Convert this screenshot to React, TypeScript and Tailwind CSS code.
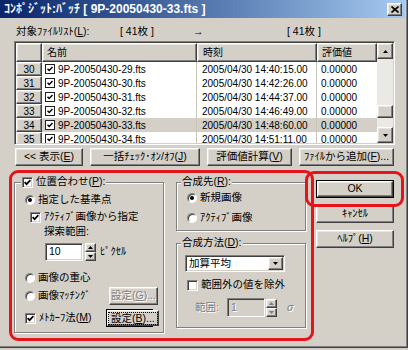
import React from 'react';

const FONT = "font-['Liberation_Sans','Noto_Sans_CJK_JP',sans-serif]";
const RAISED =
  'border border-t-white border-l-white border-r-[#404040] border-b-[#404040] shadow-[inset_-1px_-1px_0_#808080,inset_1px_1px_0_#e8e6e0] bg-[#d4d0c8]';
const SUNKEN =
  'border border-t-[#808080] border-l-[#808080] border-r-white border-b-white shadow-[inset_1px_1px_0_#404040,inset_-1px_-1px_0_#d4d0c8]';
const GROUP = 'border border-[#808080] shadow-[inset_1px_1px_0_#fff,1px_1px_0_#fff]';
const DIS = 'text-[#808080] [text-shadow:1px_1px_0_#fff]';

type Kids = { children?: React.ReactNode; className?: string };

const Tick = ({ s = 7 }: { s?: number }) => (
  <svg width={s} height={s} viewBox="0 0 7 7">
    <path d="M0.6 3.2 L2.6 5.2 L6.4 1.2" stroke="#000" strokeWidth="1.7" fill="none" />
  </svg>
);

const CheckBox = ({ checked }: { checked?: boolean }) => (
  <span className={`${SUNKEN} bg-white w-[11px] h-[11px] shrink-0 flex items-center justify-center`}>
    {checked && <Tick />}
  </span>
);

const Radio = ({ checked }: { checked?: boolean }) => (
  <span className="w-[10px] h-[10px] shrink-0 rounded-full border border-t-[#808080] border-l-[#808080] border-r-white border-b-white bg-white shadow-[inset_1px_1px_0_#404040] flex items-center justify-center">
    {checked && <span className="w-[4px] h-[4px] rounded-full bg-black" />}
  </span>
);

const Tri = ({ down, color = '#000' }: { down?: boolean; color?: string }) => (
  <svg width="5" height="3" viewBox="0 0 5 3">
    <path d={down ? 'M0 0 H5 L2.5 3 Z' : 'M0 3 H5 L2.5 0 Z'} fill={color} />
  </svg>
);

const Spin = ({ disabled }: { disabled?: boolean }) => (
  <div className="flex flex-col w-[11px] h-[18px]">
    <div className={`${RAISED} flex-1 flex items-center justify-center`}>
      <Tri color={disabled ? '#808080' : '#000'} />
    </div>
    <div className={`${RAISED} flex-1 flex items-center justify-center`}>
      <Tri down color={disabled ? '#808080' : '#000'} />
    </div>
  </div>
);

const Btn = ({ children, className = '', disabled, focus, def }: Kids & { disabled?: boolean; focus?: boolean; def?: boolean }) =>
  def || focus ? (
    <div className={`border border-black flex ${className}`}>
      <div className={`${RAISED} flex-1 flex items-center justify-center`}>
        <span className={focus ? 'border border-dotted border-black px-[2px] leading-[11px]' : ''}>{children}</span>
      </div>
    </div>
  ) : (
    <div className={`${RAISED} flex items-center justify-center ${disabled ? DIS : ''} ${className}`}>{children}</div>
  );

const Legend = ({ children, className = '' }: Kids) => (
  <div className={`-mt-[7px] h-[12px] w-fit px-[1px] bg-[#d4d0c8] flex items-center gap-[3px] ${className}`}>{children}</div>
);

const rows = [
  { n: 30, f: '9P-20050430-29.fts', t: '2005/04/30 14:40:15.00' },
  { n: 31, f: '9P-20050430-30.fts', t: '2005/04/30 14:42:26.00' },
  { n: 32, f: '9P-20050430-31.fts', t: '2005/04/30 14:44:37.00' },
  { n: 33, f: '9P-20050430-32.fts', t: '2005/04/30 14:46:49.00' },
  { n: 34, f: '9P-20050430-33.fts', t: '2005/04/30 14:48:60.00', sel: true },
  { n: 35, f: '9P-20050430-34.fts', t: '2005/04/30 14:51:11.00' },
];

export default function App() {
  return (
    <div className={`relative w-[408px] h-[350px] overflow-hidden bg-[#d4d0c8] text-black ${FONT}`}>
      <div className="w-[408px] h-[348px] flex flex-col border-r border-b border-r-[#404040] border-b-[#404040] shadow-[inset_-1px_-1px_0_#808080]">
        {/* title bar */}
        <div className="h-[18px] w-[405px] shrink-0 flex items-center bg-linear-to-r from-[#0a246a] to-[#a6caf0]">
          <span className="pl-[4px] text-[12px] font-bold text-white leading-none whitespace-pre">
            ｺﾝﾎﾟｼﾞｯﾄ:ﾊﾞｯﾁ [ 9P-20050430-33.fts ]
          </span>
          <div className={`ml-auto mr-[3px] w-[15px] h-[13px] ${RAISED} flex items-center justify-center`}>
            <svg width="8" height="7" viewBox="0 0 8 7">
              <path d="M0.5 0.5 L7.5 6.5 M7.5 0.5 L0.5 6.5" stroke="#000" strokeWidth="1.6" />
            </svg>
          </div>
        </div>

        {/* file list label */}
        <div className="mt-[6px] h-[16px] pl-[16px] flex items-center text-[10.5px] whitespace-pre">
          <span className="w-[104px]">
            対象ﾌｧｲﾙﾘｽﾄ(<u>L</u>):
          </span>
          <span className="w-[73px]">[ 41枚 ]</span>
          <span className="w-[94px]">→</span>
          <span>[ 41枚 ]</span>
        </div>

        {/* list */}
        <div className={`mt-[1px] ml-[14px] w-[381px] h-[104px] p-[1px] bg-white flex ${SUNKEN}`}>
          <div className="w-[361px] h-[100px] overflow-hidden flex flex-col text-[10px] whitespace-pre">
            <div className="h-[19px] shrink-0 flex">
              <div className={`w-[26px] ${RAISED}`} />
              <div className={`w-[155px] pl-[4px] flex items-center ${RAISED}`}>名前</div>
              <div className={`w-[120px] pl-[5px] flex items-center ${RAISED}`}>時刻</div>
              <div className={`w-[60px] pl-[4px] flex items-center ${RAISED}`}>評価値</div>
            </div>
            {rows.map((r) => (
              <div key={r.n} className={`h-[14px] shrink-0 flex ${r.sel ? 'bg-[#d4d0c8]' : ''}`}>
                <div className={`w-[26px] flex items-center justify-center ${RAISED}`}>{r.n}</div>
                <div className="w-[155px] pl-[3px] flex items-center gap-[3px] border-r border-[#c8c4bc]">
                  <span className="w-[10px] h-[10px] border border-[#202020] bg-white flex items-center justify-center">
                    <Tick s={6} />
                  </span>
                  <span>{r.f}</span>
                </div>
                <div className="w-[120px] pl-[5px] flex items-center border-r border-[#c8c4bc]">{r.t}</div>
                <div className="w-[60px] pl-[4px] flex items-center">0.00000</div>
              </div>
            ))}
          </div>
          <div className="w-[16px] h-[100px] flex flex-col bg-[#ebe9e4]">
            <div className={`h-[16px] shrink-0 flex items-center justify-center ${RAISED}`}>
              <Tri />
            </div>
            <div className="flex-1" />
            <div className={`h-[13px] shrink-0 ${RAISED}`} />
            <div className="h-[9px] shrink-0" />
            <div className={`h-[16px] shrink-0 flex items-center justify-center ${RAISED}`}>
              <Tri down />
            </div>
          </div>
        </div>

        {/* list buttons */}
        <div className="mt-[3px] ml-[15px] h-[18px] flex gap-[7px] text-[10.5px] whitespace-pre">
          <Btn className="w-[68px]">
            {'<< 表示('}
            <u>E</u>)
          </Btn>
          <Btn className="w-[110px]">
            一括ﾁｪｯｸ･ｵﾝ/ｵﾌ(<u>J</u>)
          </Btn>
          <Btn className="w-[85px]">
            評価値計算(<u>V</u>)
          </Btn>
          <Btn className="w-[95px]">
            ﾌｧｲﾙから追加(<u>F</u>)...
          </Btn>
        </div>

        {/* options */}
        <div className="mt-[10px] ml-[14px] flex items-start text-[10.5px] whitespace-pre">
          <div className={`mt-[6px] w-[150px] h-[151px] flex flex-col ${GROUP}`}>
            <Legend className="ml-[6px]">
              <CheckBox checked />
              <span>
                位置合わせ(<u>P</u>):
              </span>
            </Legend>
            <div className="mt-[5px] h-[14px] pl-[10px] flex items-center gap-[3px]">
              <Radio checked />
              <span>指定した基準点</span>
            </div>
            <div className="mt-[3px] h-[14px] pl-[15px] flex items-center gap-[3px]">
              <CheckBox checked />
              <span>ｱｸﾃｨﾌﾞ画像から指定</span>
            </div>
            <div className="mt-[1px] h-[14px] pl-[29px] flex items-center">探索範囲:</div>
            <div className="mt-[4px] h-[18px] pl-[30px] flex items-center">
              <div className={`w-[38px] h-[18px] bg-white pl-[3px] flex items-center ${SUNKEN}`}>10</div>
              <div className="ml-[2px]">
                <Spin />
              </div>
              <span className="ml-[4px]">ﾋﾟｸｾﾙ</span>
            </div>
            <div className="mt-[10px] h-[14px] pl-[10px] flex items-center gap-[3px]">
              <Radio />
              <span>画像の重心</span>
            </div>
            <div className="mt-[2px] h-[18px] pl-[10px] flex items-center gap-[3px]">
              <Radio />
              <span className="w-[68px]">画像ﾏｯﾁﾝｸﾞ</span>
              <Btn disabled className="w-[49px] h-[18px]">
                設定(<u>G</u>)...
              </Btn>
            </div>
            <div className="mt-[4px] h-[18px] pl-[10px] flex items-center gap-[3px]">
              <CheckBox checked />
              <span className="w-[64px]">
                ﾒﾄｶｰﾌ法(<u>M</u>)
              </span>
              <Btn focus className="w-[47px] h-[18px]">
                設定(<u>B</u>)...
              </Btn>
            </div>
          </div>

          <div className="ml-[12px] mt-[6px] w-[130px] flex flex-col">
            <div className={`h-[49px] flex flex-col ${GROUP}`}>
              <Legend className="ml-[4px]">
                <span>
                  合成先(<u>R</u>):
                </span>
              </Legend>
              <div className="mt-[3px] h-[14px] pl-[10px] flex items-center gap-[3px]">
                <Radio checked />
                <span>新規画像</span>
              </div>
              <div className="mt-[6px] h-[14px] pl-[10px] flex items-center gap-[3px]">
                <Radio />
                <span>ｱｸﾃｨﾌﾞ画像</span>
              </div>
            </div>
            <div className={`mt-[12px] h-[85px] flex flex-col ${GROUP}`}>
              <Legend className="ml-[4px]">
                <span>
                  合成方法(<u>D</u>):
                </span>
              </Legend>
              <div className={`mt-[6px] ml-[8px] w-[100px] h-[17px] bg-white flex items-center p-[1px] ${SUNKEN}`}>
                <span className="flex-1 pl-[2px]">加算平均</span>
                <div className={`w-[15px] h-[13px] flex items-center justify-center ${RAISED}`}>
                  <Tri down />
                </div>
              </div>
              <div className="mt-[6px] h-[14px] pl-[10px] flex items-center gap-[3px]">
                <CheckBox />
                <span>範囲外の値を除外</span>
              </div>
              <div className="mt-[6px] h-[19px] pl-[18px] flex items-center">
                <span className={`w-[32px] ${DIS}`}>範囲:</span>
                <div className={`w-[38px] h-[19px] bg-[#d4d0c8] pl-[3px] flex items-center ${SUNKEN} ${DIS}`}>1</div>
                <div className="ml-[1px]">
                  <Spin disabled />
                </div>
                <span className={`ml-[10px] italic ${DIS}`}>σ</span>
              </div>
            </div>
          </div>

          <div className="ml-[10px] mt-[4px] w-[78px] flex flex-col gap-[7px]">
            <Btn def className="h-[18px]">
              OK
            </Btn>
            <Btn className="h-[18px]">ｷｬﾝｾﾙ</Btn>
            <Btn className="h-[18px]">
              ﾍﾙﾌﾟ(<u>H</u>)
            </Btn>
          </div>
        </div>
      </div>

      {/* red annotation marks */}
      <div className="absolute left-[9px] top-[170px] w-[305px] h-[171px] border-[3px] border-[#e5141b] rounded-[9px] pointer-events-none" />
      <div className="absolute left-[305px] top-[171px] w-[99px] h-[36px] border-[3px] border-[#e5141b] rounded-[9px] pointer-events-none" />
    </div>
  );
}
